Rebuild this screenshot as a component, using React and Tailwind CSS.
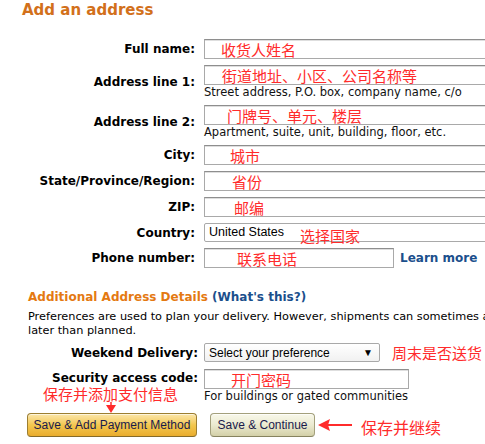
import React from 'react';

// annotation text (red Chinese notes drawn over the form)
function Note({ children, className = '' }) {
  return (
    <span className={`font-['Noto_Sans_CJK_SC',sans-serif] text-[15px] leading-none text-[#ff2b2b] whitespace-nowrap ${className}`}>
      {children}
    </span>
  );
}

function Label({ children, className = '' }) {
  return <div className={`text-right text-[12px] font-bold leading-[16px] whitespace-nowrap ${className}`}>{children}</div>;
}

function TextBox({ className = 'w-[300px]', indent = 'pl-[16px]', note }) {
  return (
    <div className={`flex h-[20px] items-center border border-[#a9a9a9] border-t-[#8e8e8e] bg-white shadow-[inset_0_1px_0_#dedede] ${className} ${indent}`}>
      {note && <Note>{note}</Note>}
    </div>
  );
}

function Hint({ children }) {
  return <div className="mt-[1px] text-[11.5px] leading-[13px] whitespace-nowrap text-[#111]">{children}</div>;
}

export default function App() {
  return (
    <div className="h-[444px] w-[485px] overflow-hidden bg-white font-['DejaVu_Sans',sans-serif] text-black">
      <div className="w-[620px]">
        <h1 className="pl-[22px] pt-[1px] text-[15px] font-bold leading-[18px] text-[#d2701b]">Add an address</h1>

        {/* main address fields */}
        <div className="mt-[20px] grid grid-cols-[195px_auto] items-center gap-x-[9px] gap-y-[6px]">
          <Label>Full name:</Label>
          <TextBox indent="pl-[16px]" note="收货人姓名" />

          <Label>Address line 1:</Label>
          <div>
            <TextBox indent="pl-[17px]" note="街道地址、小区、公司名称等" />
            <Hint>Street address, P.O. box, company name, c/o</Hint>
          </div>

          <Label>Address line 2:</Label>
          <div>
            <TextBox indent="pl-[22px]" note="门牌号、单元、楼层" />
            <Hint>Apartment, suite, unit, building, floor, etc.</Hint>
          </div>

          <Label>City:</Label>
          <TextBox indent="pl-[25px]" note="城市" />

          <Label>State/Province/Region:</Label>
          <TextBox indent="pl-[27px]" note="省份" />

          <Label>ZIP:</Label>
          <TextBox indent="pl-[29px]" note="邮编" />

          <Label>Country:</Label>
          <div className="flex h-[19px] w-[300px] items-center rounded-[2px] border border-[#a9a9a9] bg-white pl-[4px]">
            <span className="font-['Liberation_Sans',sans-serif] text-[12.5px] leading-none">United States</span>
            <Note className="ml-[16px] mt-[6px]">选择国家</Note>
          </div>

          <Label>Phone number:</Label>
          <div className="flex items-center">
            <TextBox className="w-[190px]" indent="pl-[32px]" note="联系电话" />
            <a className="ml-[6px] text-[12px] font-bold text-[#1b4f8c]">Learn more</a>
          </div>
        </div>

        {/* additional details */}
        <div className="mt-[21px] pl-[28px]">
          <div className="text-[12px] font-bold leading-[16px] text-[#e47911]">
            Additional Address Details <span className="text-[#1b4f8c]">(What's this?)</span>
          </div>
          <p className="mt-[5px] text-[11.3px] leading-[14px] whitespace-nowrap">
            Preferences are used to plan your delivery. However, shipments can sometimes arrive early or
            <br />
            later than planned.
          </p>
        </div>

        <div className="relative mt-[5px] grid grid-cols-[198px_auto] items-center gap-x-[6px] gap-y-[7px]">
          <Label>Weekend Delivery:</Label>
          <div className="flex items-center">
            <div className="flex h-[19px] w-[176px] items-center justify-between rounded-[2px] border border-[#a9a9a9] bg-gradient-to-b from-white to-[#f1f1f1] pl-[4px] pr-[6px] font-['Liberation_Sans',sans-serif] text-[12px] leading-none">
              <span>Select your preference</span>
              <span className="text-[10px]">▼</span>
            </div>
            <Note className="ml-[12px]">周末是否送货</Note>
          </div>

          <Label className="self-start leading-[18px]">Security access code:</Label>
          <div>
            <TextBox className="w-[205px]" indent="pl-[26px]" note="开门密码" />
            <Hint>For buildings or gated communities</Hint>
          </div>

          {/* annotation over the label column */}
          <div className="absolute left-[43px] top-[43px] flex flex-col items-center">
            <Note>保存并添加支付信息</Note>
            <svg width="10" height="11" viewBox="0 0 10 11" className="mt-[1px]">
              <line x1="5" y1="0" x2="5" y2="4" stroke="#ff2b2b" strokeWidth="1.5" />
              <polygon points="0,3 10,3 5,11" fill="#ff2b2b" />
            </svg>
          </div>
        </div>

        {/* buttons */}
        <div className="mt-[10px] flex items-center pl-[27px]">
          <button className="h-[24px] w-[170px] whitespace-nowrap rounded-[4px] border border-[#9c7e31] border-b-[#846a29] bg-gradient-to-b from-[#fbe6a8] via-[#f3c74e] to-[#e9ac2c] font-['Liberation_Sans',sans-serif] text-[12px] leading-none text-[#1a1a4c] shadow-[inset_0_1px_0_rgba(255,255,255,0.6)]">
            Save &amp; Add Payment Method
          </button>
          <button className="ml-[13px] h-[24px] w-[105px] whitespace-nowrap rounded-[4px] border border-[#a3a07c] border-b-[#86835f] bg-gradient-to-b from-[#f8f8ea] via-[#ebead0] to-[#d3d0a8] font-['Liberation_Sans',sans-serif] text-[12px] leading-none text-[#1a1a4c] shadow-[inset_0_1px_0_rgba(255,255,255,0.7)]">
            Save &amp; Continue
          </button>
          <svg width="34" height="12" viewBox="0 0 34 12" className="ml-[3px]">
            <polygon points="0,6 12,0 10,6 12,12" fill="#ff2b2b" />
            <line x1="9" y1="6" x2="34" y2="6" stroke="#ff2b2b" strokeWidth="2" />
          </svg>
          <Note className="ml-[9px] mt-[4px] text-[16px]">保存并继续</Note>
        </div>
      </div>
    </div>
  );
}
